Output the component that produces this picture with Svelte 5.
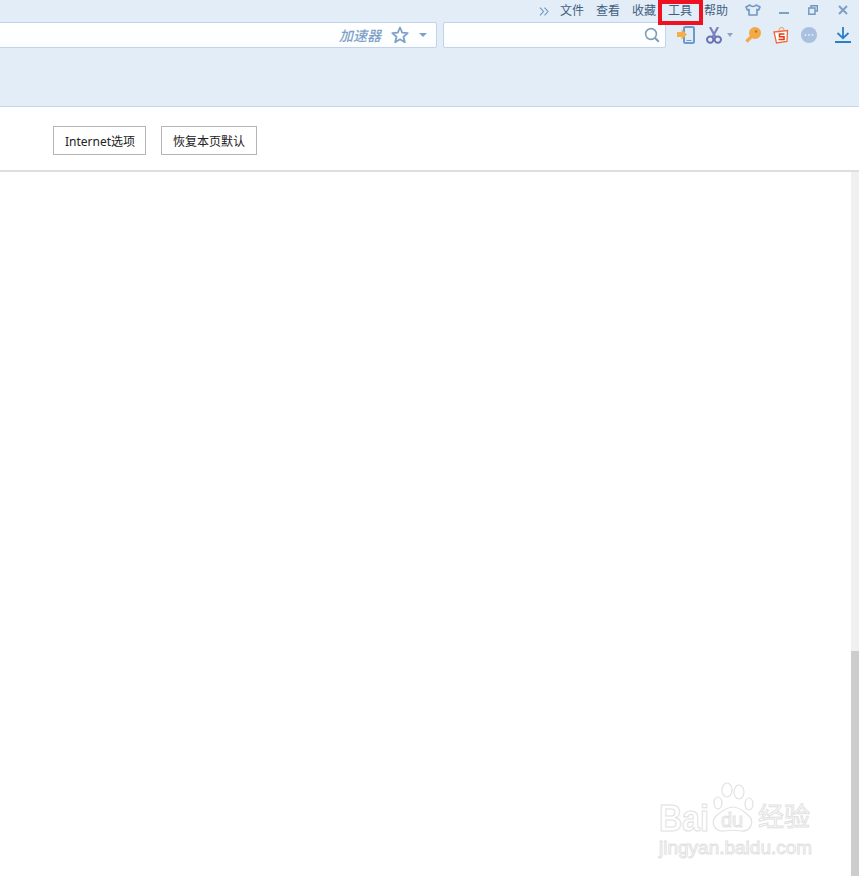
<script>
	const menus = ['文件', '查看', '收藏', '工具', '帮助'];
	const buttons = ['Internet选项', '恢复本页默认'];
</script>

<div class="page">
	<header class="top">
		<div class="menu-row">
			<svg class="more" viewBox="0 0 10 9" width="10" height="9">
				<path d="M1 0.7 L4.5 4.5 L1 8.3 M5.5 0.7 L9 4.5 L5.5 8.3" fill="none" stroke="#6f97c0" stroke-width="1.1" />
			</svg>
			{#each menus as menu}
				<span class="menu-item" class:marked={menu === '工具'}>{menu}</span>
			{/each}
			<svg class="win shirt" viewBox="0 0 16 12" width="16" height="12">
				<path d="M5 1 L1 3 L2.3 6 L4 5.4 V11 H12 V5.4 L13.7 6 L15 3 L11 1 C10 3 6 3 5 1 Z" fill="none" stroke="#6f97c0" stroke-width="1.6" stroke-linejoin="round" />
			</svg>
			<svg class="win minimize" viewBox="0 0 10 10" width="10" height="10">
				<rect x="0" y="7" width="10" height="2" fill="#7ba0c6" />
			</svg>
			<svg class="win restore" viewBox="0 0 10 10" width="10" height="10">
				<path d="M3 2.5 V0.7 H9.3 V6 H7.5 M0.8 3 H7 V9.2 H0.8 Z" fill="none" stroke="#6f97c0" stroke-width="1.4" />
			</svg>
			<svg class="win close" viewBox="0 0 10 10" width="10" height="10">
				<path d="M1 1 L9 9 M9 1 L1 9" stroke="#7ba0c6" stroke-width="2" />
			</svg>
		</div>

		<div class="tool-row">
			<div class="address">
				<span class="speed">加速器</span>
				<svg class="star" viewBox="0 0 18 18" width="18" height="18">
					<path d="M9 1.5 L11.2 6.6 L16.7 7.1 L12.5 10.7 L13.8 16.2 L9 13.3 L4.2 16.2 L5.5 10.7 L1.3 7.1 L6.8 6.6 Z" fill="none" stroke="#7fa1c8" stroke-width="1.8" stroke-linejoin="round" />
				</svg>
				<span class="caret"></span>
			</div>
			<div class="search">
				<svg viewBox="0 0 16 16" width="16" height="16">
					<circle cx="7" cy="7" r="5.4" fill="none" stroke="#7f9db8" stroke-width="1.6" />
					<path d="M11 11 L14.8 14.8" stroke="#7f9db8" stroke-width="2" />
				</svg>
			</div>
			<div class="tools">
				<svg class="phone" viewBox="0 0 18 18" width="18" height="18">
					<rect x="7" y="1" width="10" height="16" rx="1.5" fill="#e2ecf8" stroke="#6c9acb" stroke-width="2" />
					<path d="M9.5 14.5 H14.5" stroke="#6c9acb" stroke-width="1" />
					<path d="M0 6 H4.5 V3.5 L10 8.5 L4.5 13.5 V11 H0 Z" fill="#f4ae4a" />
				</svg>
				<svg class="scissors" viewBox="0 0 16 17" width="16" height="17">
					<path d="M4 0 L9.5 10 M12 0 L6.5 10" stroke="#7a82bd" stroke-width="2.2" />
					<circle cx="4.2" cy="12.6" r="3.2" fill="none" stroke="#6a72b5" stroke-width="2" />
					<circle cx="11.8" cy="12.6" r="3.2" fill="none" stroke="#6a72b5" stroke-width="2" />
				</svg>
				<span class="caret small"></span>
				<svg class="key" viewBox="0 0 16 16" width="16" height="16">
					<circle cx="10" cy="6" r="6" fill="#f3a945" />
					<circle cx="11" cy="4.5" r="1.2" fill="#b4752a" />
					<path d="M7 9 L1.5 14.5" stroke="#f3a945" stroke-width="3.2" />
				</svg>
				<svg class="bag" viewBox="0 0 16 18" width="16" height="18">
					<path d="M6 6 C6 0 11 0 11 5" fill="none" stroke="#f0a58a" stroke-width="1.1" />
					<path d="M1 6 L14.5 4.5 L14 15.5 L3.5 17 Z" fill="#fff" stroke="#ee6a3a" stroke-width="1.3" />
					<path d="M11.5 8 H6.5 V10.8 H11 V13.5 H5.5" fill="none" stroke="#ea3b12" stroke-width="1.6" />
				</svg>
				<svg class="dots" viewBox="0 0 16 16" width="16" height="16">
					<circle cx="8" cy="8" r="8" fill="#a9c0de" />
					<circle cx="4.5" cy="8" r="1" fill="#e2ecf8" />
					<circle cx="8" cy="8" r="1" fill="#e2ecf8" />
					<circle cx="11.5" cy="8" r="1" fill="#e2ecf8" />
				</svg>
				<svg class="download" viewBox="0 0 16 16" width="16" height="16">
					<path d="M8 0 V11 M2.5 6 L8 11.2 L13.5 6" fill="none" stroke="#2a7fc6" stroke-width="1.8" />
					<rect x="0" y="14" width="16" height="2" fill="#2a7fc6" />
				</svg>
			</div>
		</div>
	</header>

	<div class="actions">
		{#each buttons as label}
			<button>{label}</button>
		{/each}
	</div>

	<main class="content">
		<div class="scrollbar">
			<div class="thumb"></div>
		</div>
		<div class="watermark">
			<div class="logo">
				<span class="bai">Bai</span>
				<svg class="paw" viewBox="0 0 48 50" width="48" height="50">
					<ellipse cx="10" cy="21" rx="4" ry="6" />
					<ellipse cx="19" cy="8" rx="5" ry="7" />
					<ellipse cx="31" cy="10" rx="5" ry="7" />
					<ellipse cx="41" cy="22" rx="4" ry="6" />
					<path d="M25 25 C32 25 36 30 41 34 C47 40 42 50 33 49 C28 48 22 48 16 49 C7 50 2 41 8 34 C13 30 18 25 25 25 Z" />
				</svg>
				<span class="du">du</span>
				<span class="jy">经验</span>
			</div>
			<div class="url">jingyan.baidu.com</div>
		</div>
	</main>
</div>

<style>
	:global(body) {
		margin: 0;
		background: #fff;
		overflow: hidden;
	}

	.page {
		display: flex;
		flex-direction: column;
		height: 876px;
		font-family: "Noto Sans", "Noto Sans CJK SC", sans-serif;
		font-size: 12px;
	}

	.top {
		height: 106px;
		background: #e3edf8;
		border-bottom: 1px solid #c6d6ea;
	}

	.menu-row {
		display: flex;
		align-items: center;
		height: 22px;
		padding-left: 539px;
		color: #3f5f7f;
	}

	.more {
		flex: none;
		width: 10px;
		margin-right: 11px;
	}

	.menu-item {
		position: relative;
		width: 24px;
		margin-right: 12px;
		line-height: 18px;
		white-space: nowrap;
	}

	.marked::after {
		content: '';
		position: absolute;
		left: -10px;
		top: -2px;
		width: 37px;
		height: 17px;
		border: 4px solid #ee1122;
	}

	.win {
		flex: none;
		margin-bottom: 3px;
	}

	.shirt {
		margin-left: 5px;
	}

	.minimize {
		margin-left: 18px;
	}

	.restore {
		margin-left: 19px;
	}

	.close {
		margin-left: 20px;
	}

	.tool-row {
		display: flex;
		align-items: stretch;
		height: 26px;
	}

	.address,
	.search {
		display: flex;
		align-items: center;
		justify-content: flex-end;
		box-sizing: border-box;
		background: linear-gradient(#ffffff, #fbfdff);
		border: 1px solid #c3d4e8;
		border-radius: 2px;
	}

	.address {
		width: 439px;
		margin-left: -2px;
		padding-right: 9px;
	}

	.speed {
		margin-right: 1px;
		font-size: 14px;
		font-weight: 500;
		font-style: italic;
		color: #7fa1c8;
	}

	.star {
		margin: 0 10px 0 9px;
	}

	.caret {
		width: 0;
		height: 0;
		border-left: 4px solid transparent;
		border-right: 4px solid transparent;
		border-top: 4px solid #7fa1c8;
	}

	.search {
		width: 223px;
		margin-left: 6px;
		padding-right: 5px;
	}

	.tools {
		display: flex;
		align-items: center;
		padding-left: 11px;
	}

	.scissors {
		margin-left: 11px;
	}

	.caret.small {
		margin-left: 5px;
		border-left-width: 3px;
		border-right-width: 3px;
		border-top-color: #8fa3bf;
	}

	.key {
		margin-left: 12px;
	}

	.bag {
		margin-left: 12px;
	}

	.dots {
		margin-left: 12px;
	}

	.download {
		margin-left: 18px;
	}

	.actions {
		display: flex;
		align-items: center;
		gap: 15px;
		box-sizing: border-box;
		height: 65px;
		padding: 4px 0 0 53px;
		border-bottom: 2px solid #dedede;
	}

	button {
		height: 29px;
		padding: 0 11px;
		background: #fff;
		border: 1px solid #b5b5b5;
		font-family: inherit;
		font-size: 12px;
		color: #222;
	}

	button:first-child {
		padding-right: 10px;
	}

	.content {
		position: relative;
		flex: 1;
		display: flex;
		justify-content: flex-end;
	}

	.scrollbar {
		display: flex;
		flex-direction: column;
		justify-content: flex-end;
		width: 8px;
		background: #f0f0f0;
	}

	.thumb {
		height: 225px;
		background: #cdcdcd;
	}

	.watermark {
		position: absolute;
		left: 659px;
		top: 610px;
		color: #fff;
		font-family: "Liberation Sans", "Noto Sans CJK SC", sans-serif;
	}

	.logo {
		display: flex;
		align-items: flex-end;
		height: 50px;
	}

	.bai,
	.du,
	.jy,
	.url {
		-webkit-text-stroke: 1px #e2e2e2;
	}

	.bai {
		width: 49px;
		margin-bottom: -6px;
		font-size: 32px;
		font-weight: 700;
		line-height: 36px;
		transform: scaleY(1.15);
		transform-origin: 0 78%;
	}

	.paw {
		flex: none;
		fill: #fff;
		stroke: #e2e2e2;
		stroke-width: 1.2;
	}

	.du {
		position: absolute;
		left: 62px;
		top: 28px;
		font-size: 20px;
		line-height: 20px;
	}

	.jy {
		margin-left: 2px;
		font-size: 26px;
		line-height: 30px;
		white-space: nowrap;
	}

	.url {
		margin-top: 5px;
		font-size: 19px;
		line-height: 22px;
		white-space: nowrap;
	}
</style>
